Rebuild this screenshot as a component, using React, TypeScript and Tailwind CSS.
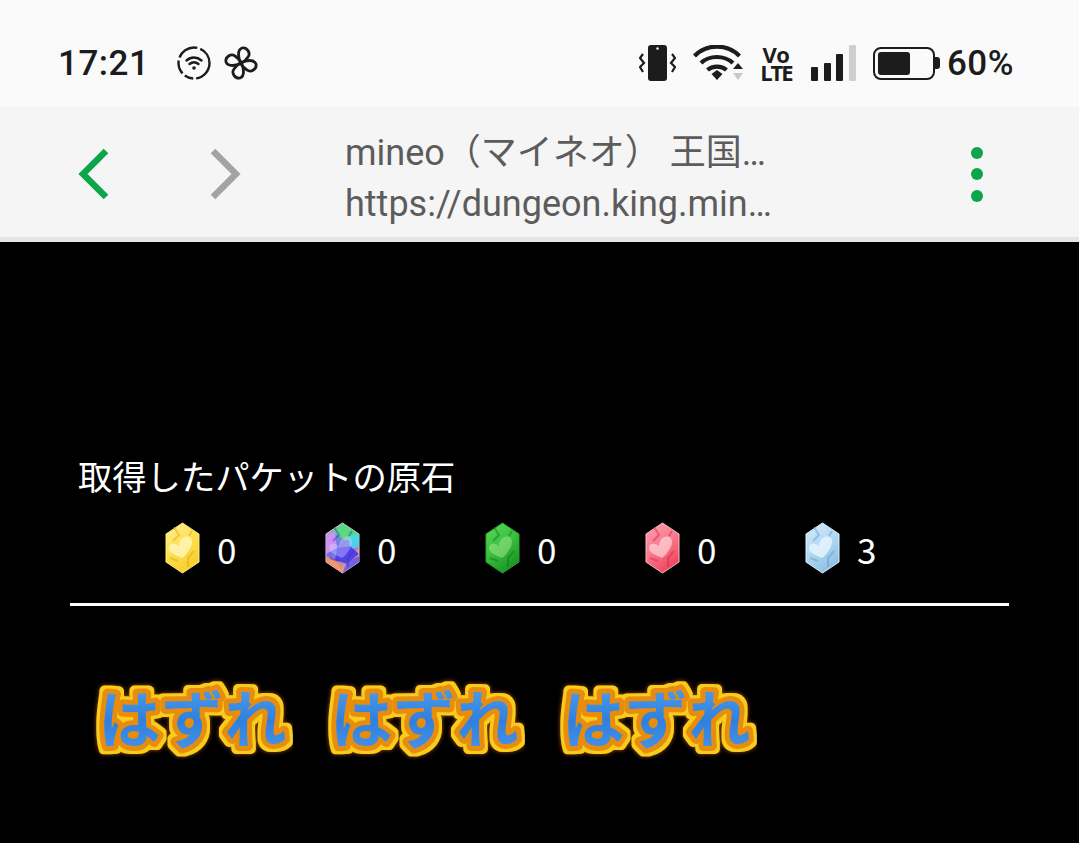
import type { FC } from "react";

const SANS = "font-['Roboto','Noto_Sans_CJK_JP',sans-serif]";

interface GemData {
	id: string;
	count: number;
	stops: string[];
	edge: string;
	light: string;
	dark: string;
	glint: number;
	patches?: { d: string; fill: string }[];
}

const gems: GemData[] = [
	{ id: "yellow", count: 0, stops: ["#fff09a", "#fde050", "#f8d030"], edge: "#ffe97a", light: "#fff6b8", dark: "#d9a514", glint: 0.85 },
	{
		id: "rainbow",
		count: 0,
		stops: ["#7fe07a", "#6a6cf0", "#f0a070"],
		edge: "#e0c8f0",
		light: "#e0e0ff",
		dark: "#3a30c8",
		glint: 0.35,
		patches: [
			{ d: "M17.500 1L34 12v8L20 18 8 10z", fill: "#58e07a" },
			{ d: "M24 14l10-2v12l-9 4z", fill: "#48d8f0" },
			{ d: "M1 12l9-2 2 16-11 6z", fill: "#d890f8" },
			{ d: "M12 26l13-2 9 8-12 10-12-4z", fill: "#4a38f0" },
			{ d: "M1 34l12 6 4 11L1 40z", fill: "#f89868" },
			{ d: "M34 34v6L17.500 51l4-10z", fill: "#6858f0" }
		]
	},
	{ id: "green", count: 0, stops: ["#58d858", "#3cc040", "#1c9826"], edge: "#2aa02a", light: "#a8e890", dark: "#0f7018", glint: 0.5 },
	{ id: "red", count: 0, stops: ["#ffa0b0", "#f87a8e", "#f04860"], edge: "#ffb8c2", light: "#ffd0d6", dark: "#d82040", glint: 0.75 },
	{ id: "blue", count: 3, stops: ["#d6ecfa", "#b2d8f2", "#90c2e6"], edge: "#e0f2fe", light: "#e8f5ff", dark: "#5f97c8", glint: 0.8 }
];

const Gem: FC<{ gem: GemData }> = ({ gem }) => (
	<svg width="35" height="52" viewBox="0 0 35 52" className="shrink-0 blur-[0.5px]">
		<defs>
			<linearGradient id={`gem-${gem.id}`} x1="0" y1="0" x2="0.5" y2="1">
				<stop offset="0" stopColor={gem.stops[0]} />
				<stop offset="0.55" stopColor={gem.stops[1]} />
				<stop offset="1" stopColor={gem.stops[2]} />
			</linearGradient>
		</defs>
		<polygon points="17.5,1 34,12 34,40 17.5,51 1,40 1,12" fill={`url(#gem-${gem.id})`} stroke={gem.edge} strokeWidth="1" />
		{gem.patches?.map((patch) => <path key={patch.d} d={patch.d} fill={patch.fill} fillOpacity="0.9" />)}
		<path d="M9 5l5 8-6 6M29 29l-6 7 0 9M5 36l8 3M27 9l-3 5" fill="none" stroke={gem.dark} strokeOpacity="0.45" strokeWidth="2" />
		<path
			d="M17 36C10 33 3 30 4 25 5 21 10 21 14 24 14 18 19 13 24 15 29 17 27 24 24 28 22 31 20 34 17 36z"
			fill={gem.light}
			fillOpacity={gem.glint}
		/>
	</svg>
);

const Hazure: FC<{ index: number }> = ({ index }) => (
	<svg width="200" height="100" viewBox="0 0 200 100" className="shrink-0">
		<defs>
			<linearGradient id={`hazure-fill-${index}`} x1="0" y1="0" x2="0" y2="1">
				<stop offset="0" stopColor="#5aa8f2" />
				<stop offset="0.55" stopColor="#2f80de" />
				<stop offset="1" stopColor="#4d98ea" />
			</linearGradient>
			<filter id={`hazure-rim-${index}`} x="-10%" y="-15%" width="120%" height="130%">
				<feMorphology in="SourceAlpha" operator="dilate" radius="2.500" result="fat" />
				<feFlood floodColor="#f8cc1c" />
				<feComposite in2="fat" operator="in" result="yellow" />
				<feGaussianBlur in="fat" stdDeviation="2" result="soft" />
				<feFlood floodColor="#a85000" />
				<feComposite in2="soft" operator="in" result="glow" />
				<feMerge>
					<feMergeNode in="glow" />
					<feMergeNode in="yellow" />
					<feMergeNode in="SourceGraphic" />
				</feMerge>
			</filter>
		</defs>
		<text
			x="100"
			y="74"
			textAnchor="middle"
			fontSize="62"
			fontWeight="700"
			letterSpacing="1"
			fontFamily="'Noto Sans CJK JP', sans-serif"
			fill={`url(#hazure-fill-${index})`}
			stroke="#e88c10"
			strokeWidth="10"
			strokeLinejoin="round"
			paintOrder="stroke"
			filter={`url(#hazure-rim-${index})`}>
			はずれ
		</text>
	</svg>
);

const StatusLeftIcons: FC = () => (
	<div className="flex items-center gap-[13px]">
		<svg width="34" height="34" viewBox="0 0 34 34" fill="none" stroke="#1c1c1c" strokeWidth="2.4">
			<circle cx="17" cy="17" r="15.500" strokeDasharray="22 3 9 3 14 3 22 3" />
			<path d="M9.500 14.500c4.500-4 10.500-4 15 0M12.500 18c2.700-2.200 6.300-2.200 9 0" strokeLinecap="round" />
			<circle cx="17" cy="22" r="1.800" fill="#1c1c1c" stroke="none" />
		</svg>
		<svg width="34" height="34" viewBox="-17 -17 34 34" fill="none" stroke="#1c1c1c" strokeWidth="2.800" strokeLinejoin="round">
			<path d="M0 0C-3-5-4-13 1-15 6-16 10-10 7-6 5-3 3-1 0 0z" />
			<path d="M0 0C-3-5-4-13 1-15 6-16 10-10 7-6 5-3 3-1 0 0z" transform="rotate(90)" />
			<path d="M0 0C-3-5-4-13 1-15 6-16 10-10 7-6 5-3 3-1 0 0z" transform="rotate(180)" />
			<path d="M0 0C-3-5-4-13 1-15 6-16 10-10 7-6 5-3 3-1 0 0z" transform="rotate(270)" />
		</svg>
	</div>
);

const StatusRightIcons: FC = () => (
	<div className="flex items-center">
		<svg width="37" height="36" viewBox="0 0 37 36" className="mr-[17px]">
			<rect x="9" y="0" width="19" height="36" rx="3" fill="#1c1c1c" />
			<circle cx="18.500" cy="3.500" r="1.200" fill="#fafafa" />
			<path d="M4 9L1 13l4 5-4 4 3 5M33 9l3 4-4 5 4 4-3 5" fill="none" stroke="#1c1c1c" strokeWidth="2.200" />
		</svg>
		<svg width="50" height="36" viewBox="0 0 50 36" className="mr-[16px]">
			<path d="M1.500 11c12-12.500 33-12.500 45 0M8 18c8.500-8 23-8 32 0M14.500 25c5-4.500 14-4.500 19 0" fill="none" stroke="#1c1c1c" strokeWidth="4.200" />
			<path d="M18.500 29l5.500-4 5.500 4-5.500 6z" fill="#1c1c1c" />
			<path d="M40 24l5-6 5 6z" fill="#1c1c1c" />
			<path d="M40 28h10l-5 7z" fill="#c8c8c8" />
		</svg>
		<div className="mr-[19px] flex w-[33px] flex-col items-center text-[22px] leading-[18px] font-bold text-[#1c1c1c] font-['Open_Sans',sans-serif]">
			<span className="tracking-[-0.5px]">Vo</span>
			<span className="tracking-[-2px]">LTE</span>
		</div>
		<div className="mr-[17px] flex h-[36px] items-end gap-[5.500px]">
			<span className="h-[14px] w-[7px] rounded-[1px] bg-[#1c1c1c]" />
			<span className="h-[18px] w-[7px] rounded-[1px] bg-[#1c1c1c]" />
			<span className="h-[27px] w-[7px] rounded-[1px] bg-[#1c1c1c]" />
			<span className="h-[36px] w-[7px] rounded-[1px] bg-[#cfcfcf]" />
		</div>
		<div className="mr-[7px] flex items-center">
			<div className="h-[33px] w-[62px] rounded-[8px] border-2 border-[#1c1c1c] p-[3px]">
				<div className="h-full w-[32px] rounded-[3px] bg-[#1c1c1c]" />
			</div>
			<span className="h-[12px] w-[5px] rounded-r-[3px] bg-[#1c1c1c]" />
		</div>
		<span className="text-[35px] leading-none font-medium text-[#1c1c1c] tracking-[0.5px]">60%</span>
	</div>
);

const Toolbar: FC = () => (
	<div className="flex h-[130px] items-center bg-[#f5f5f5] pl-[78px] pr-[96px] pt-[4px]">
		<svg width="32" height="52" viewBox="0 0 32 52" fill="none" stroke="#0ca54a" strokeWidth="6.500" className="mr-[99px]">
			<path d="M28 3L5 26l23 23" />
		</svg>
		<svg width="32" height="52" viewBox="0 0 32 52" fill="none" stroke="#a3a3a3" strokeWidth="6.500" className="mr-[104px]">
			<path d="M4 3l23 23L4 49" />
		</svg>
		<div className="flex-1 pt-[10px] text-[36px] leading-[51px] text-[#5c5c5c]">
			<div>mineo（マイネオ） 王国…</div>
			<div>https://dungeon.king.min…</div>
		</div>
		<div className="flex flex-col gap-[9.500px]">
			<span className="size-[12px] rounded-full bg-[#0ca54a]" />
			<span className="size-[12px] rounded-full bg-[#0ca54a]" />
			<span className="size-[12px] rounded-full bg-[#0ca54a]" />
		</div>
	</div>
);

export default function App() {
	return (
		<div className={`flex h-[843px] w-[1079px] flex-col overflow-hidden bg-black ${SANS}`}>
			<div className="flex h-[107px] items-center justify-between bg-[#fafafa] pl-[58px] pr-[65px] pt-[19px]">
				<div className="flex items-center gap-[28px]">
					<span className="text-[35px] leading-none font-medium text-[#1c1c1c] tracking-[0.5px]">17:21</span>
					<StatusLeftIcons />
				</div>
				<StatusRightIcons />
			</div>
			<Toolbar />
			<div className="h-[5px] bg-[#e6e6e6]" />
			<main className="flex flex-col px-[70px] pt-[216px]">
				<h2 className="pl-[8px] text-[34.300px] leading-[40px] font-normal text-white">取得したパケットの原石</h2>
				<div className="mt-[24px] flex pl-[95px]">
					{gems.map((gem) => (
						<div key={gem.id} className="flex w-[160px] items-center gap-[17px]">
							<Gem gem={gem} />
							<span className="pt-[1px] text-[35px] leading-none text-white font-['Noto_Sans_CJK_JP',sans-serif]">{gem.count}</span>
						</div>
					))}
				</div>
				<div className="mt-[29px] h-[3px] w-[939px] bg-white" />
				<div className="mt-[63px] flex gap-[32px] pl-[23px]">
					<Hazure index={0} />
					<Hazure index={1} />
					<Hazure index={2} />
				</div>
			</main>
		</div>
	);
}
